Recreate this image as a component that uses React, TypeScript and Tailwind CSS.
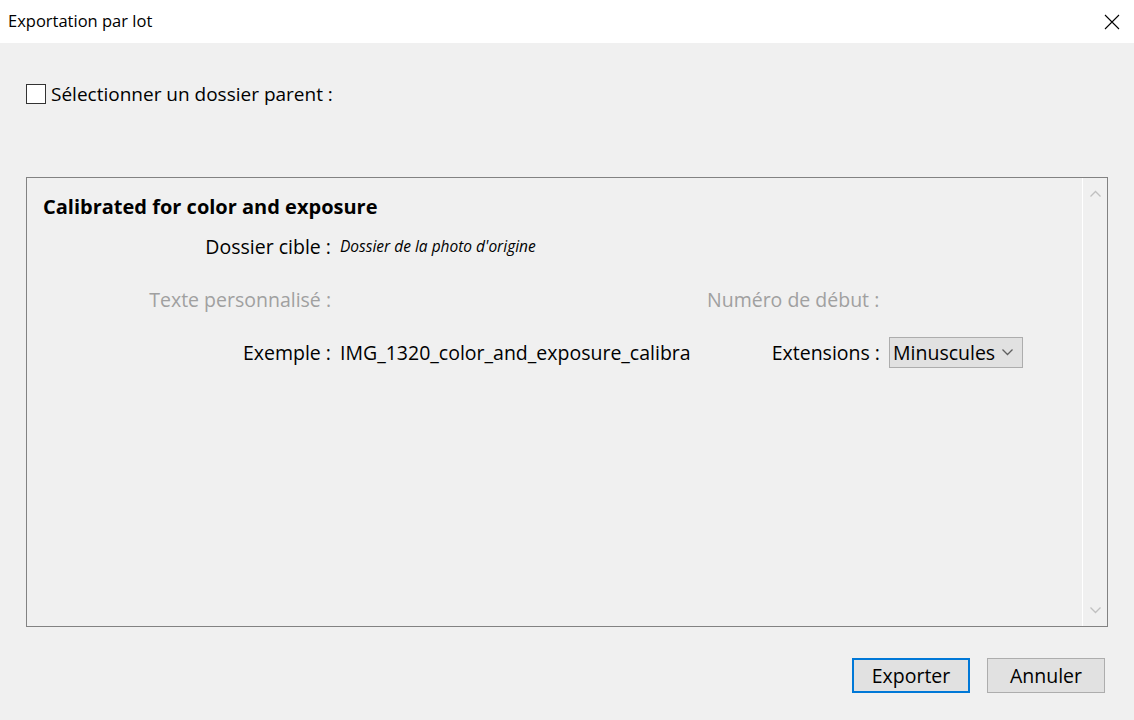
import React from 'react';

const font = { fontFamily: '"Open Sans", "Noto Sans", "Liberation Sans", sans-serif' };

const Chevron: React.FC<{ up?: boolean; className?: string }> = ({ up, className }) => (
  <svg width="11" height="7" viewBox="0 0 11 7" className={className}>
    <path
      d={up ? 'M0.5 6.5 L5.5 1.5 L10.5 6.5' : 'M0.5 0.5 L5.5 5.5 L10.5 0.5'}
      fill="none"
      stroke="currentColor"
      strokeWidth="1.3"
    />
  </svg>
);

export default function App() {
  return (
    <div className="w-[1134px] h-[720px] bg-[#f0f0f0] flex flex-col text-black" style={font}>
      {/* title bar */}
      <div className="h-[43px] bg-white flex items-center justify-between shrink-0">
        <span className="pl-2 text-[16.5px] leading-none">Exportation par lot</span>
        <svg width="16" height="16" viewBox="0 0 16 16" className="mr-[14px]">
          <path d="M1 1 L15 15 M15 1 L1 15" stroke="#000" strokeWidth="1.1" fill="none" />
        </svg>
      </div>

      {/* parent folder checkbox */}
      <div className="flex items-center pl-[26px] mt-[41px] h-[20px]">
        <div className="w-[20px] h-[20px] border border-[#333] bg-white shrink-0" />
        <span className="ml-[5px] text-[19px] leading-none">Sélectionner un dossier parent :</span>
      </div>

      {/* preset panel */}
      <div className="mx-[26px] mt-[73px] h-[450px] border border-[#828282] flex">
        <div className="flex-1 flex flex-col pl-[16px] pt-[17px]">
          <div className="text-[20px] font-bold leading-[24px]">Calibrated for color and exposure</div>

          <div className="flex items-center mt-[16px] h-[24px]">
            <span className="w-[288px] text-right text-[19.5px]">Dossier cible :</span>
            <span className="ml-[9px] text-[15.5px] italic">Dossier de la photo d'origine</span>
          </div>

          <div className="flex items-center mt-[29px] h-[24px] text-[#a0a0a0] text-[19.5px]">
            <span className="w-[288px] text-right">Texte personnalisé :</span>
            <span className="ml-[376px]">Numéro de début :</span>
          </div>

          <div className="flex items-center mt-[25px] h-[31px] text-[19.5px]">
            <span className="w-[288px] text-right">Exemple :</span>
            <span className="ml-[9px] w-[360px] overflow-hidden whitespace-nowrap">IMG_1320_color_and_exposure_calibra</span>
            <span className="w-[180px] text-right">Extensions :</span>
            <div className="ml-[9px] w-[134px] h-[31px] bg-[#e1e1e1] border border-[#adadad] flex items-center justify-between pl-[3px] pr-[9px]">
              <span>Minuscules</span>
              <Chevron className="text-[#606060]" />
            </div>
          </div>
        </div>

        {/* scrollbar */}
        <div className="w-[25px] border-l border-white flex flex-col items-center justify-between py-[12px] text-[#c0c0c0]">
          <Chevron up />
          <Chevron />
        </div>
      </div>

      {/* buttons */}
      <div className="flex justify-end gap-[17px] pr-[29px] mt-[31px]">
        <button className="w-[118px] h-[35px] bg-[#e1e1e1] border-2 border-[#0078d7] text-[19.5px] leading-none">Exporter</button>
        <button className="w-[118px] h-[35px] bg-[#e1e1e1] border border-[#adadad] text-[19.5px] leading-none">Annuler</button>
      </div>
    </div>
  );
}
